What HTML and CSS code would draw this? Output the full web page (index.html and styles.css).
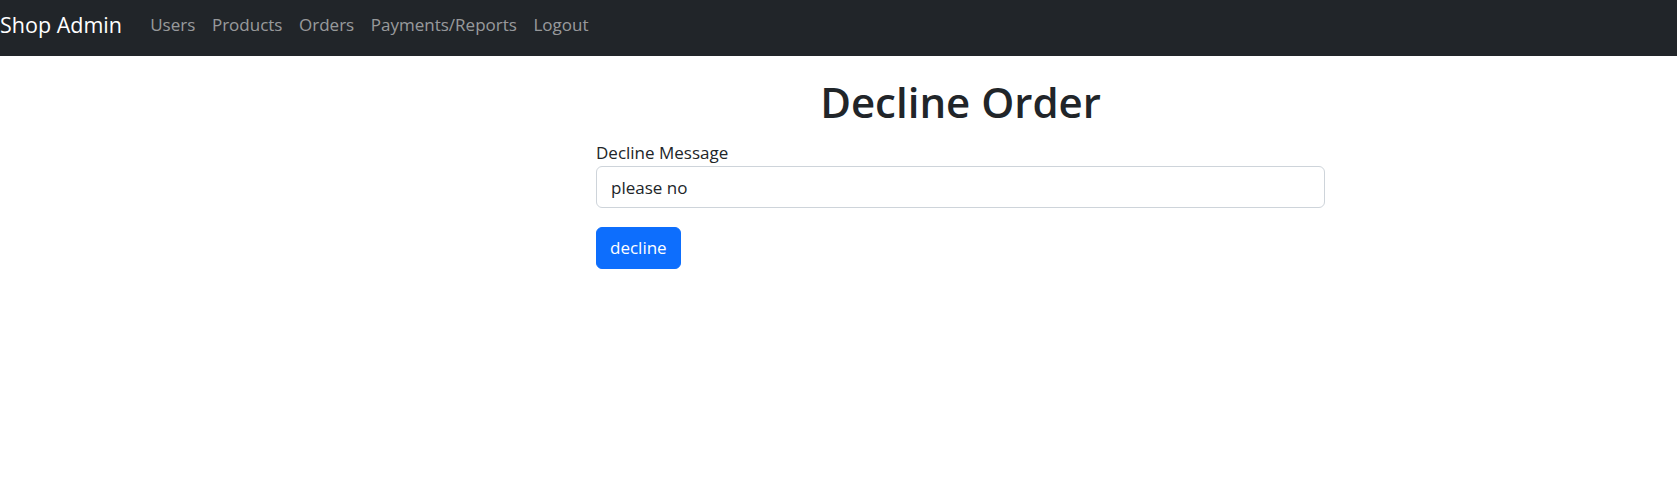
FILE: index.html
```html
<!DOCTYPE html>
<html lang="en">
<head>
<meta charset="utf-8">
<title>Decline Order</title>
<link rel="stylesheet" href="styles.css">
</head>
<body>
<nav class="navbar">
  <a class="brand" href="#">Shop Admin</a>
  <ul class="nav">
    <li><a class="nav-link" href="#">Users</a></li>
    <li><a class="nav-link" href="#">Products</a></li>
    <li><a class="nav-link" href="#">Orders</a></li>
    <li><a class="nav-link" href="#">Payments/Reports</a></li>
    <li><a class="nav-link" href="#">Logout</a></li>
  </ul>
</nav>
<main class="content">
  <h1 class="title">Decline Order</h1>
  <form class="form">
    <label class="label" for="msg">Decline Message</label>
    <input class="input" id="msg" type="text" value="please no">
    <button class="btn" type="button">decline</button>
  </form>
</main>
</body>
</html>
```

FILE: styles.css
```css
* { box-sizing: border-box; }
html, body { margin: 0; padding: 0; }
body {
  font-family: "Open Sans", "Noto Sans", sans-serif;
  font-size: 17px;
  line-height: 24px;
  color: #212529;
  background: #fff;
}
.navbar {
  display: flex;
  align-items: flex-start;
  height: 56px;
  padding: 5px 0 0;
  background: #212529;
}
.brand {
  font-size: 21.5px;
  line-height: 30px;
  padding: 5px 0;
  margin-right: 20px;
  color: #fff;
  text-decoration: none;
}
.nav {
  display: flex;
  list-style: none;
  margin: 0;
  padding: 0;
}
.nav-link {
  display: block;
  padding: 8px 8.3px;
  color: rgba(255, 255, 255, 0.55);
  text-decoration: none;
}
.content {
  width: 729px;
  margin-left: 596px;
}
.title {
  margin: 21px 0 14px;
  font-size: 42px;
  line-height: 50px;
  font-weight: 600;
  text-align: center;
}
.form {
  display: flex;
  flex-direction: column;
  align-items: flex-start;
}
.label {
  display: block;
  margin-bottom: 1px;
}
.input {
  width: 100%;
  height: 42px;
  padding: 8px 14px;
  font: inherit;
  color: #212529;
  border: 1px solid #ced4da;
  border-radius: 6px;
  background: #fff;
}
.btn {
  margin-top: 19px;
  height: 42px;
  padding: 8px 13px;
  font: inherit;
  color: #fff;
  background: #0d6efd;
  border: 1px solid #0d6efd;
  border-radius: 6px;
}
```
